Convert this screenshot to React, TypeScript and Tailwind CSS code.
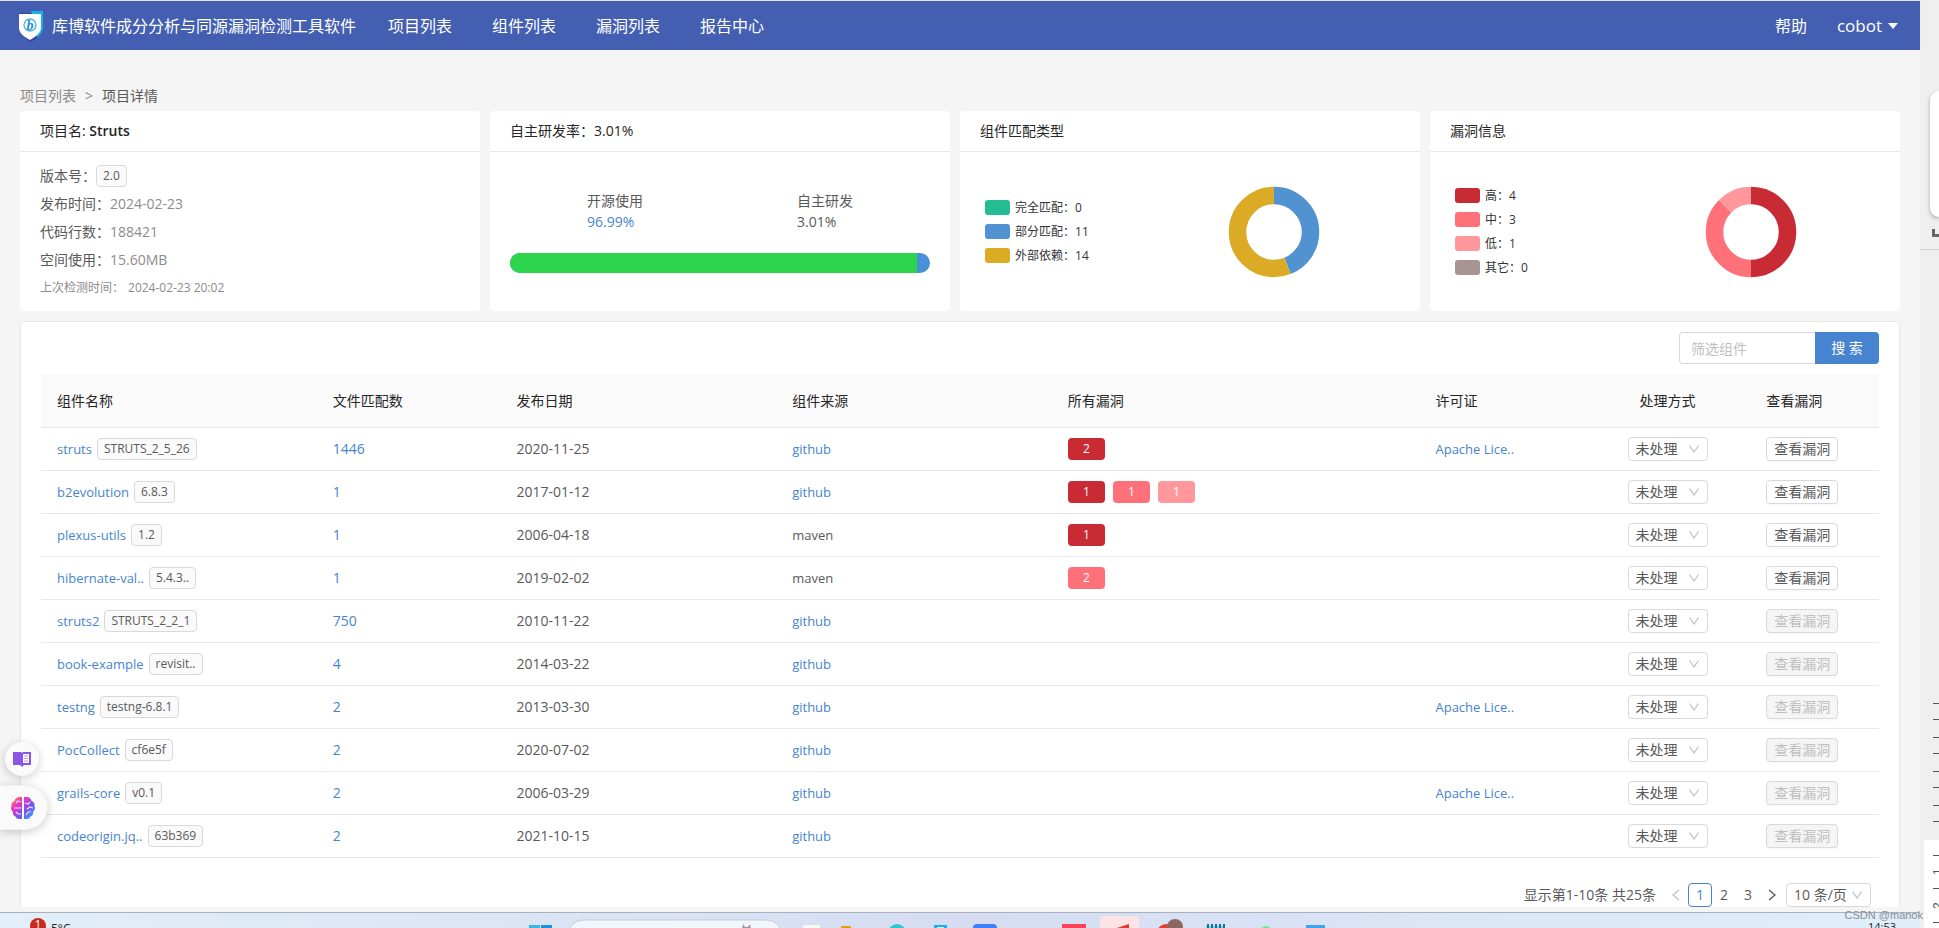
import type { ReactNode } from "react";

type Level = "high" | "mid" | "low";

type Component = {
  name: string;
  version: string;
  files: number;
  date: string;
  source: string;
  vulns?: [Level, number][];
  license?: string;
};

type Slice = { label: string; value: number; color: string };

const components: Component[] = [
  { name: "struts", version: "STRUTS_2_5_26", files: 1446, date: "2020-11-25", source: "github", vulns: [["high", 2]], license: "Apache Lice.." },
  { name: "b2evolution", version: "6.8.3", files: 1, date: "2017-01-12", source: "github", vulns: [["high", 1], ["mid", 1], ["low", 1]] },
  { name: "plexus-utils", version: "1.2", files: 1, date: "2006-04-18", source: "maven", vulns: [["high", 1]] },
  { name: "hibernate-val..", version: "5.4.3..", files: 1, date: "2019-02-02", source: "maven", vulns: [["mid", 2]] },
  { name: "struts2", version: "STRUTS_2_2_1", files: 750, date: "2010-11-22", source: "github" },
  { name: "book-example", version: "revisit..", files: 4, date: "2014-03-22", source: "github" },
  { name: "testng", version: "testng-6.8.1", files: 2, date: "2013-03-30", source: "github", license: "Apache Lice.." },
  { name: "PocCollect", version: "cf6e5f", files: 2, date: "2020-07-02", source: "github" },
  { name: "grails-core", version: "v0.1", files: 2, date: "2006-03-29", source: "github", license: "Apache Lice.." },
  { name: "codeorigin.jq..", version: "63b369", files: 2, date: "2021-10-15", source: "github" },
];

const levelStyles: Record<Level, string> = {
  high: "bg-[#c82b34]",
  mid: "bg-[#ff7179]",
  low: "bg-[#ff979d]",
};

const matchTypes: Slice[] = [
  { label: "完全匹配", value: 0, color: "#25bc94" },
  { label: "部分匹配", value: 11, color: "#5192d0" },
  { label: "外部依赖", value: 14, color: "#dbab26" },
];

const vulnLevels: Slice[] = [
  { label: "高", value: 4, color: "#c82b34" },
  { label: "中", value: 3, color: "#ff7179" },
  { label: "低", value: 1, color: "#ff979d" },
  { label: "其它", value: 0, color: "#a79493" },
];

function ShieldLogo() {
  return (
    <svg width="26" height="32" viewBox="0 0 26 32" aria-hidden="true">
      <path d="M1 3h12V1h12v17c0 6-6 10-12 14C7 28 1 24 1 18z" fill="#2c489f" />
      <path d="M13 1h12v17c0 4-3 7-6 10z" fill="#16b1e6" />
      <path d="M1 4h22v14c0 5-6 9-11 12C6 27 1 23 1 18z" fill="#fff" />
      <circle cx="12" cy="15" r="6" fill="none" stroke="#4db4e6" strokeWidth="1.300" />
      <text x="12" y="20" textAnchor="middle" fontSize="14" fontStyle="italic" fontWeight="700" fill="#1b8fd2" fontFamily="Liberation Serif, serif">
        b
      </text>
    </svg>
  );
}

function Chevron() {
  return (
    <svg className="pointer-events-none absolute top-2 right-2 text-[#bfbfbf]" width="12" height="8" viewBox="0 0 12 8" aria-hidden="true">
      <path d="M1.500 0.500 6 7 10.500 0.500" fill="none" stroke="currentColor" strokeWidth="1.200" />
    </svg>
  );
}

function Tag({ children }: { children: ReactNode }) {
  return (
    <span className="inline-flex h-[22px] items-center rounded border border-[#d9d9d9] bg-[#fafafa] px-1.5 text-xs text-[#595959]">
      {children}
    </span>
  );
}

function Card({ title, children }: { title: ReactNode; children: ReactNode }) {
  return (
    <section className="flex h-[200px] flex-col rounded bg-white">
      <h2 className="flex h-[41px] items-center border-b border-[#e8e8e8] px-5 text-sm text-[#262626]">{title}</h2>
      {children}
    </section>
  );
}

// Ring is drawn as stroked arcs, each slice offset by the ones before it
function Donut({ data }: { data: Slice[] }) {
  const total = data.reduce((sum, d) => sum + d.value, 0);
  let used = 0;

  return (
    <svg width="92" height="92" viewBox="0 0 92 92" role="img" aria-label="环形图">
      {data.map((d) => {
        const start = used;
        used += d.value;
        if (!d.value) return null;
        return (
          <circle
            key={d.label}
            cx="46"
            cy="46"
            r="36.500"
            fill="none"
            stroke={d.color}
            strokeWidth="17.500"
            pathLength={total}
            strokeDasharray={`${d.value} ${total - d.value}`}
            strokeDashoffset={-start}
            transform="rotate(-90 46 46)"
          />
        );
      })}
    </svg>
  );
}

function ChartBody({ data }: { data: Slice[] }) {
  return (
    <div className="grid flex-1 grid-cols-[2fr_3fr] items-center px-5">
      <ul className="pl-[5px]">
        {data.map((d) => (
          <li key={d.label} className="flex h-6 items-center gap-[5px] text-xs text-[#333]">
            <span className="h-[15px] w-[25px] rounded-[3px]" style={{ backgroundColor: d.color }} />
            {d.label}：{d.value}
          </li>
        ))}
      </ul>
      <div className="flex justify-center">
        <Donut data={data} />
      </div>
    </div>
  );
}

function InfoRow({ label, value }: { label: string; value: string }) {
  return (
    <div className="flex h-7 items-center text-sm">
      <dt className="text-[#595959]">{label}：</dt>
      <dd className="text-[#8c8c8c]">{value}</dd>
    </div>
  );
}

function Navbar() {
  return (
    <nav className="flex h-[50px] items-center border-t border-[#dfe3ea] bg-[#445fb1] pr-[22px] pl-[18px] text-base text-white">
      <ShieldLogo />
      <span className="ml-2">库博软件成分分析与同源漏洞检测工具软件</span>
      <div className="ml-8 flex gap-10">
        {["项目列表", "组件列表", "漏洞列表", "报告中心"].map((item) => (
          <a key={item} href="#">{item}</a>
        ))}
      </div>
      <div className="ml-auto flex items-center gap-[30px]">
        <a href="#">帮助</a>
        <button type="button" className="flex items-center gap-1.5 text-[17px]">
          cobot
          <svg width="10" height="6" viewBox="0 0 10 6" aria-hidden="true">
            <path d="M0 0h10L5 6z" fill="#fff" />
          </svg>
        </button>
      </div>
    </nav>
  );
}

function Summary() {
  return (
    <div className="grid grid-cols-4">
      <div className="pr-2.5">
        <Card title={<>项目名:&nbsp;<span className="font-semibold">Struts</span></>}>
          <dl className="px-5 pt-2.5">
            <div className="flex h-7 items-center text-sm">
              <dt className="text-[#595959]">版本号：</dt>
              <dd className="flex"><Tag>2.0</Tag></dd>
            </div>
            <InfoRow label="发布时间" value="2024-02-23" />
            <InfoRow label="代码行数" value="188421" />
            <InfoRow label="空间使用" value="15.60MB" />
            <div className="flex h-7 items-center gap-1 text-xs text-[#8c8c8c]">
              <dt>上次检测时间：</dt>
              <dd>2024-02-23 20:02</dd>
            </div>
          </dl>
        </Card>
      </div>

      <div className="pr-2.5">
        <Card title={<>自主研发率：<span className="font-medium">3.01%</span></>}>
          <div className="px-5 pt-[38px]">
            <div className="grid grid-cols-2 justify-items-center text-sm/[21px] text-[#595959]">
              <div>
                <p>开源使用</p>
                <p className="text-[#4784cf]">96.99%</p>
              </div>
              <div>
                <p>自主研发</p>
                <p>3.01%</p>
              </div>
            </div>
            <div className="mt-[21px] h-5 overflow-hidden rounded-full bg-[#4890d8]">
              <div className="h-full bg-[#2cd54b]" style={{ width: "96.99%" }} />
            </div>
          </div>
        </Card>
      </div>

      <div className="pr-2.5">
        <Card title="组件匹配类型">
          <ChartBody data={matchTypes} />
        </Card>
      </div>

      <Card title="漏洞信息">
        <ChartBody data={vulnLevels} />
      </Card>
    </div>
  );
}

function ComponentRow({ item }: { item: Component }) {
  return (
    <tr className="h-[43px] [&>td]:border-b [&>td]:border-[#e8e8e8] [&>td]:px-4">
      <td>
        <div className="flex items-center gap-[5px]">
          <a href="#" className="text-[13px] text-[#4784cf]">{item.name}</a>
          <Tag>{item.version}</Tag>
        </div>
      </td>
      <td><a href="#" className="text-[#4784cf]">{item.files}</a></td>
      <td>{item.date}</td>
      <td className="text-[13px]">
        {item.source === "github" ? <a href="#" className="text-[#4784cf]">github</a> : item.source}
      </td>
      <td>
        <div className="flex gap-2">
          {item.vulns?.map(([level, count]) => (
            <span key={level} className={`flex h-[22px] w-[37px] items-center justify-center rounded text-xs text-white ${levelStyles[level]}`}>
              {count}
            </span>
          ))}
        </div>
      </td>
      <td className="text-[13px]">{item.license && <a href="#" className="text-[#4784cf]">{item.license}</a>}</td>
      <td>
        <div className="relative mx-auto w-20">
          <select aria-label={`${item.name} 处理方式`} className="block h-6 w-full appearance-none rounded border border-[#d9d9d9] bg-white pl-[7px] text-sm/[20px]">
            <option>未处理</option>
          </select>
          <Chevron />
        </div>
      </td>
      <td>
        <button
          type="button"
          disabled={!item.vulns}
          className="block h-6 w-[72px] rounded border border-[#d9d9d9] bg-white text-sm/[20px] whitespace-nowrap shadow-[0_2px_0_rgba(0,0,0,0.02)] disabled:bg-[#f5f5f5] disabled:text-[#bfbfbf]"
        >
          查看漏洞
        </button>
      </td>
    </tr>
  );
}

function ComponentTable() {
  return (
    <section className="mt-2.5 flex flex-col rounded-t border border-b-0 border-[#e8e8e8] bg-white px-5 pt-2.5 text-sm text-[#595959]">
      <form className="flex self-end" onSubmit={(e) => e.preventDefault()}>
        <input
          type="text"
          aria-label="筛选组件"
          placeholder="筛选组件"
          className="h-8 w-[136px] rounded-l border border-r-0 border-[#d9d9d9] px-[11px] placeholder:text-[#bfbfbf]"
        />
        <button type="submit" className="h-8 w-16 rounded-r bg-[#4784cf] text-white">搜 索</button>
      </form>

      <table className="mt-2.5 w-full table-fixed border-separate border-spacing-0">
        <colgroup>
          <col className="w-[15%]" />
          <col className="w-[10%]" />
          <col className="w-[15%]" />
          <col className="w-[15%]" />
          <col className="w-[20%]" />
          <col className="w-[9%]" />
          <col className="w-[9%]" />
          <col className="w-[7%]" />
        </colgroup>
        <thead>
          <tr className="h-[54px] bg-[#fafafa] text-left text-[#262626] [&>th]:border-b [&>th]:border-[#e8e8e8] [&>th]:px-4 [&>th]:font-normal">
            <th>组件名称</th>
            <th>文件匹配数</th>
            <th>发布日期</th>
            <th>组件来源</th>
            <th>所有漏洞</th>
            <th>许可证</th>
            <th className="text-center">处理方式</th>
            <th>查看漏洞</th>
          </tr>
        </thead>
        <tbody>
          {components.map((item) => (
            <ComponentRow key={item.name} item={item} />
          ))}
        </tbody>
      </table>

      <div className="mt-[25px] flex items-center justify-end pr-2">
        <span className="mr-2">显示第1-10条 共25条</span>
        <button type="button" aria-label="上一页" disabled className="flex size-6 items-center justify-center text-[#bfbfbf]">
          <svg width="8" height="12" viewBox="0 0 8 12" aria-hidden="true">
            <path d="M7 1 1 6l6 5" fill="none" stroke="currentColor" strokeWidth="1.200" />
          </svg>
        </button>
        <button type="button" className="size-6 rounded border border-[#4784cf] text-sm/[22px] text-[#4784cf]">1</button>
        <button type="button" className="size-6">2</button>
        <button type="button" className="size-6">3</button>
        <button type="button" aria-label="下一页" className="flex size-6 items-center justify-center">
          <svg width="8" height="12" viewBox="0 0 8 12" aria-hidden="true">
            <path d="m1 1 6 5-6 5" fill="none" stroke="currentColor" strokeWidth="1.400" />
          </svg>
        </button>
        <div className="relative ml-0.5 w-[85px]">
          <select aria-label="每页条数" className="block h-6 w-full appearance-none rounded border border-[#d9d9d9] bg-white pl-[7px] text-sm/[20px]">
            <option>10 条/页</option>
          </select>
          <Chevron />
        </div>
      </div>
    </section>
  );
}

// Browser extension buttons that float over the page edge
function FloatingTools() {
  return (
    <>
      <button type="button" aria-label="阅读" className="absolute bottom-[152px] left-[5px] flex size-[34px] items-center justify-center rounded-full bg-[#fafafa] shadow-[0_2px_10px_rgba(0,0,0,0.2)]">
        <svg width="18" height="16" viewBox="0 0 18 16" aria-hidden="true">
          <path d="M0 1h8l1 1 1-1h8v13h-7l-2 2-2-2H0z" fill="#8b55e8" />
          <path d="M10 3h6v9h-6z" fill="#fff" />
          <path d="M11 5h4M11 7.500h4M11 10h4" stroke="#b697f0" />
        </svg>
      </button>
      <button type="button" aria-label="助手" className="absolute bottom-[98px] left-0 flex h-[45px] w-12 items-center rounded-r-full border border-l-0 border-[#f0f0f0] bg-[#fafafa] pl-[11px] shadow-[0_2px_10px_rgba(0,0,0,0.2)]">
        <svg width="24" height="22" viewBox="0 0 24 22" aria-hidden="true">
          <defs>
            <linearGradient id="brain" x1="0" y1="0" x2="1" y2="1">
              <stop offset="0" stopColor="#ffa02e" />
              <stop offset="0.300" stopColor="#ee35c0" />
              <stop offset="0.600" stopColor="#7a54ee" />
              <stop offset="1" stopColor="#24b3ff" />
            </linearGradient>
          </defs>
          <path
            d="M11 0v22H8c-2 0-3-1-3.500-2.500C2.500 19 1.500 17 2 15 0 13.500-.500 11 .500 9 0 6.500 1.500 4.500 3.500 4 4 1.500 6 0 8 0zM13 0v22h3c2 0 3-1 3.500-2.500 2-.500 3-2.500 2.500-4.500 2-1.500 2.500-4 1.500-6 .500-2.500-1-4.500-3-5C20 1.500 18 0 16 0z"
            fill="url(#brain)"
          />
          <path d="M3 11h7M5 6l2-2 3 1M5 15l2 2 3 0M14 6l3 1 2-2M16 12l3-2 3 1M15 18l2-3 3 0" fill="none" stroke="#f4dcff" strokeWidth="1.200" />
        </svg>
      </button>
    </>
  );
}

// Sliver of the neighbouring window with its ruler
function SidePanel() {
  return (
    <aside className="flex w-[19px] shrink-0 flex-col overflow-hidden bg-[#efefef]">
      <div className="h-[91px]" />
      <div className="ml-2.5 h-[126px] rounded-l-xl bg-white shadow-[0_2px_4px_rgba(0,0,0,0.3)]" />
      <div className="mt-3 ml-3 h-2 border-b-3 border-l-3 border-[#666]" />
      <div className="mt-3 border-t border-[#cfcfcf]" />
      <svg className="mt-auto shrink-0" width="19" height="228" viewBox="0 0 19 228" aria-hidden="true">
        <path d="M4 140h15v88H4z" fill="#fff" />
        <path d="M13 3.500h6M13 19.500h6M13 37.500h6M13 53.500h6M13 71.500h6M13 87.500h6M13 105.500h6M13 121.500h6M13 155.500h6M13 188.500h6M13 222.500h6" stroke="#555" />
        <text x="-175" y="22" transform="rotate(-90)" fontSize="12" fill="#555" fontFamily="Liberation Sans, sans-serif">1</text>
        <text x="-209" y="22" transform="rotate(-90)" fontSize="12" fill="#555" fontFamily="Liberation Sans, sans-serif">2</text>
      </svg>
    </aside>
  );
}

function Taskbar() {
  return (
    <footer className="flex h-4 items-start overflow-hidden border-t border-[#a9b0c0] bg-linear-to-r from-[#e2eef8] via-[#d6ddf2] to-[#e0eefa]">
      <div className="flex w-[529px] shrink-0 items-start gap-[5px] pt-[5px] pl-[30px]">
        <span className="size-4 rounded-full bg-[#c42b1c] text-center text-xs/[14px] text-white">1</span>
        <span className="pt-1 text-xs/[14px] text-[#222]">5°C</span>
      </div>
      <svg className="shrink-0" width="800" height="24" viewBox="0 0 800 24" aria-hidden="true">
        <path d="M0 12h11v11H0z" fill="#3cb4f0" />
        <path d="M12 12h11v11H12z" fill="#1f8fe0" />
        <rect x="39" y="7" width="214" height="32" rx="15" fill="#f2f6fd" stroke="#c5cbdc" />
        <path d="m214 11 2 3h3l2-3 1 6h-9z" fill="#a58da8" />
        <path d="M274 12h17v12h-17z" fill="#f8f8f5" />
        <rect x="312" y="13" width="10" height="8" rx="1" fill="#dda10d" />
        <circle cx="368" cy="20" r="9" fill="#31c6cb" />
        <path d="M405 12h13v9h-13z" fill="#17aef5" />
        <path d="M408 14h7v7h-7z" fill="#fff" />
        <rect x="444" y="11" width="24" height="20" rx="4" fill="#3f80fb" />
        <path d="M490 18c4-4 14-4 19 0z" fill="#dca2b4" />
        <path d="M533 11h24v12h-24z" fill="#fb4258" />
        <rect x="571" y="3" width="39" height="30" rx="4" fill="#fbe3e6" />
        <path d="m585 16 15-5v6z" fill="#dd3833" />
        <circle cx="637" cy="20" r="9" fill="#e43c2e" />
        <circle cx="646" cy="14" r="8" fill="#8c6760" />
        <path d="M677 13h19v10h-19z" fill="#80d5e7" />
        <path d="M679 11v4m4-4v4m4-4v4m4-4v4m4-4v4" stroke="#19718b" strokeWidth="2" />
        <circle cx="737" cy="19" r="6" fill="#72e78c" />
        <path d="M777 12h19v10h-19z" fill="#43a2ee" />
      </svg>
      <span className="mr-6 ml-auto pt-[7px] text-[11px]/[14px] text-[#222]">14:53</span>
    </footer>
  );
}

export default function App() {
  return (
    <div className="relative flex h-screen overflow-hidden bg-[#f5f5f5] font-['Open_Sans','Noto_Sans_CJK_SC',sans-serif]">
      <div className="flex min-w-0 flex-1 flex-col">
        <Navbar />
        <main className="min-h-0 flex-1 px-5">
          <div className="flex gap-[9px] pt-9 pb-[5px] text-sm/[20px]">
            <a href="#" className="text-[#8c8c8c]">项目列表</a>
            <span className="text-[#8c8c8c]">&gt;</span>
            <span className="text-[#595959]">项目详情</span>
          </div>
          <Summary />
          <ComponentTable />
        </main>
        <Taskbar />
      </div>
      <SidePanel />
      <FloatingTools />
      <span className="absolute right-4 bottom-1 font-['Liberation_Sans',sans-serif] text-[11px]/[18px] text-[#8a8d92]">CSDN @manok</span>
    </div>
  );
}
